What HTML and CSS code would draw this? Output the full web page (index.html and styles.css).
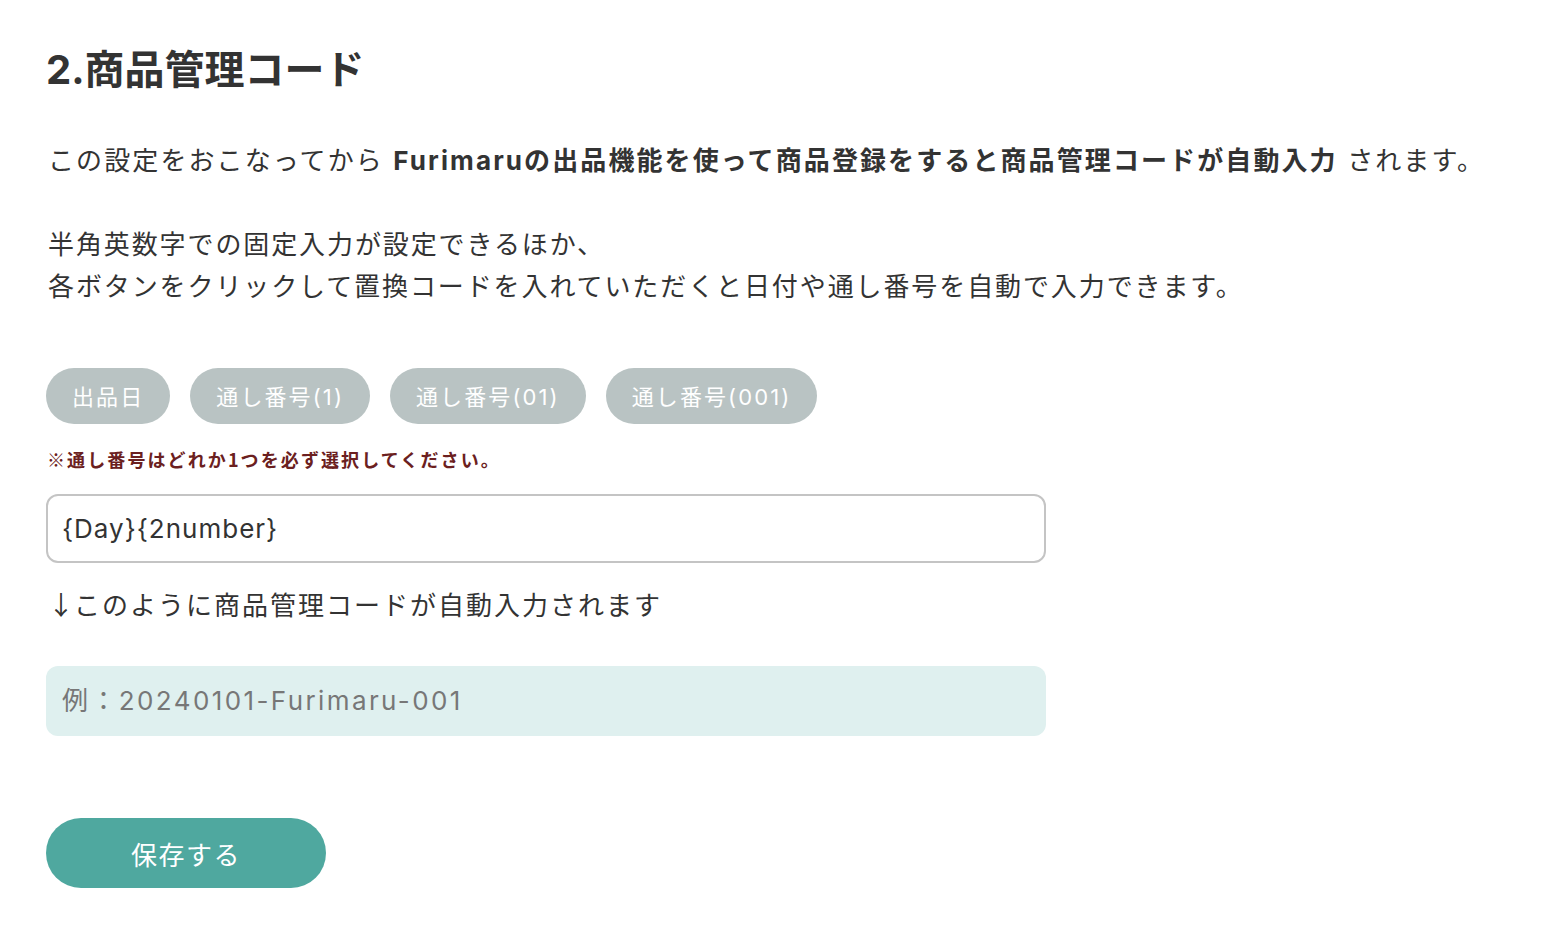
FILE: index.html
```html
<!DOCTYPE html>
<html lang="ja">
<head>
<meta charset="utf-8">
<title>商品管理コード</title>
<link rel="stylesheet" href="styles.css">
</head>
<body>
<main class="page">
  <h2 class="title">2.商品管理コード</h2>
  <p class="lead">この設定をおこなってから <strong>Furimaruの出品機能を使って商品登録をすると商品管理コードが自動入力</strong> されます。</p>
  <p class="desc">半角英数字での固定入力が設定できるほか、<br>各ボタンをクリックして置換コードを入れていただくと日付や通し番号を自動で入力できます。</p>
  <div class="tags">
    <button class="tag" type="button">出品日</button>
    <button class="tag" type="button">通し番号(1)</button>
    <button class="tag" type="button">通し番号(01)</button>
    <button class="tag" type="button">通し番号(001)</button>
  </div>
  <p class="note">※通し番号はどれか1つを必ず選択してください。</p>
  <input class="code-input" type="text" value="{Day}{2number}">
  <p class="hint"><span class="arrow">↓</span>このように商品管理コードが自動入力されます</p>
  <div class="example">例：20240101-Furimaru-001</div>
  <button class="save" type="button">保存する</button>
</main>
</body>
</html>
```
FILE: styles.css
```css
* { box-sizing: border-box; }
html, body { margin: 0; padding: 0; background: #fff; }
body {
  font-family: "Inter", "Noto Sans CJK JP", sans-serif;
  color: #333;
}
.page {
  padding: 44px 46px 0 46px;
  display: flex;
  flex-direction: column;
  align-items: flex-start;
}
.title {
  margin: 0;
  font-size: 40px;
  font-weight: 700;
  line-height: 52px;
  letter-spacing: 0;
}
.lead, .desc {
  margin: 0;
  font-size: 26px;
  line-height: 42px;
  letter-spacing: 1.9px;
  padding-left: 2px;
}
.lead { margin-top: 44px; letter-spacing: 2.1px; }
.lead strong { font-weight: 700; }
.desc { margin-top: 42px; }
.tags {
  display: flex;
  gap: 20px;
  margin-top: 60px;
}
.tag {
  height: 56px;
  border: none;
  border-radius: 28px;
  background: #b9c3c3;
  color: #fff;
  font-family: inherit;
  font-size: 22px;
  padding: 3px 26px 0 26px;
  letter-spacing: 2.1px;
  line-height: 53px;
}
.note {
  margin: 20px 0 0 0;
  font-family: "Noto Sans CJK JP", sans-serif;
  font-size: 18px;
  font-weight: 700;
  letter-spacing: 2.1px;
  color: #6b2020;
  line-height: 30px;
  padding-left: 1px;
}
.code-input {
  margin-top: 20px;
  width: 1000px;
  height: 69px;
  border: 2px solid #c4c4c4;
  border-radius: 12px;
  padding: 0 14px;
  font-family: inherit;
  font-size: 26px;
  letter-spacing: 1px;
  color: #333;
  background: #fff;
  outline: none;
}
.hint {
  margin: 20px 0 0 0;
  font-size: 26px;
  line-height: 42px;
  letter-spacing: 2px;
  padding-left: 2px;
}
.arrow {
  font-family: "Noto Sans CJK JP", sans-serif;
  letter-spacing: 0;
}
.example {
  margin-top: 39px;
  width: 1000px;
  height: 70px;
  border-radius: 12px;
  background: #dff0ef;
  color: #777;
  font-size: 26px;
  line-height: 70px;
  padding: 0 16px;
  letter-spacing: 2.4px;
}
.save {
  margin-top: 82px;
  width: 280px;
  height: 70px;
  border: none;
  border-radius: 35px;
  background: #4fa89f;
  color: #fff;
  font-family: inherit;
  font-size: 26px;
  letter-spacing: 1.5px;
}
```
